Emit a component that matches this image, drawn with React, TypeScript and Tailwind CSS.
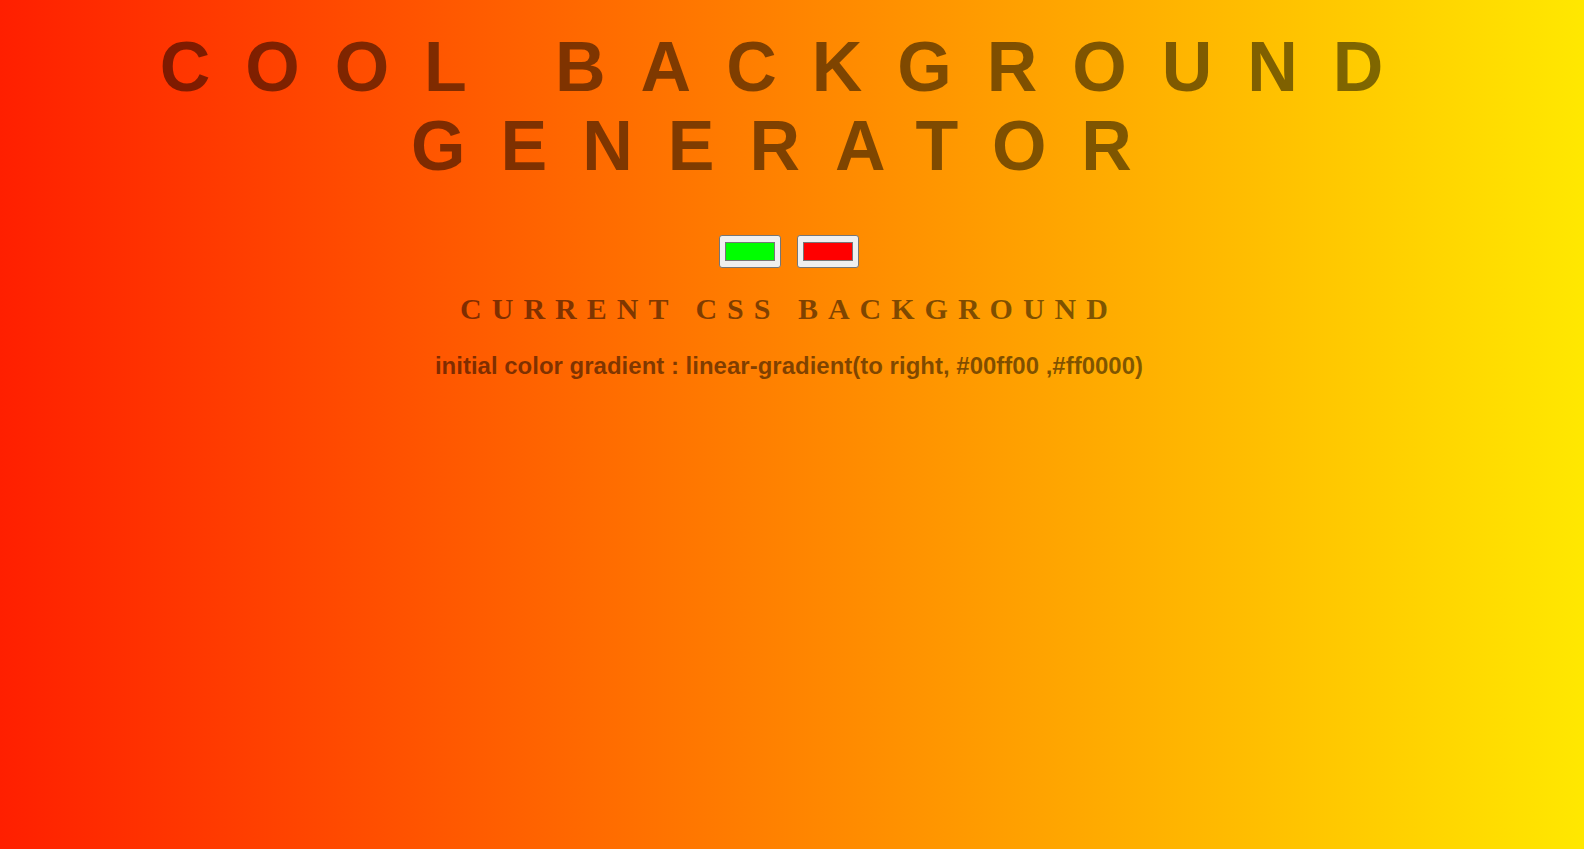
import React from "react";

function ColorBox({ color }: { color: string }) {
  return (
    <div className="w-[62px] h-[33px] bg-[#efefef] border border-[#767676] rounded-[3px] flex items-center justify-center">
      <div className="w-[50px] h-[19px] border border-[#777777]" style={{ backgroundColor: color }} />
    </div>
  );
}

export default function App() {
  return (
    <div
      className="w-full min-h-[849px] h-[849px] overflow-hidden bg-[linear-gradient(to_right,#ff1f00,#ffe800)] text-[rgba(0,0,0,0.5)] pr-[6px]"
    >
      <h1 className="pt-[28px] text-center font-bold text-[70px] leading-[79px] tracking-[35px] [font-family:'Liberation_Sans',Arial,sans-serif]">
        COOL BACKGROUND GENERATOR
      </h1>
      <div className="mt-[49px] flex justify-center gap-[16px]">
        <ColorBox color="#00ff00" />
        <ColorBox color="#ff0000" />
      </div>
      <h3 className="mt-[23px] text-center font-bold text-[30px] leading-[35px] tracking-[10px] [font-family:'Liberation_Serif','Times_New_Roman',serif]">
        CURRENT CSS BACKGROUND
      </h3>
      <p className="mt-[26px] text-center font-bold text-[24px] leading-[27px] [font-family:'Liberation_Sans',Arial,sans-serif]">
        initial color gradient : linear-gradient(to right, #00ff00 ,#ff0000)
      </p>
    </div>
  );
}
